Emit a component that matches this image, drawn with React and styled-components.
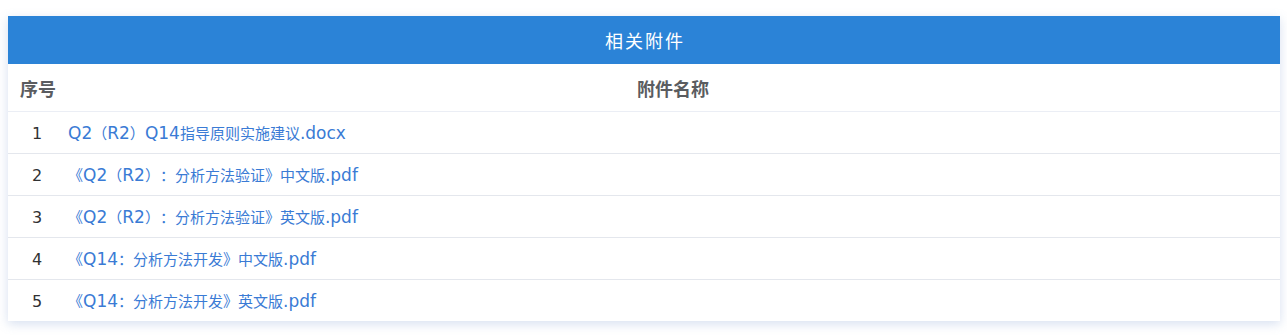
import React from 'react';
import styled, { createGlobalStyle } from 'styled-components';

const GlobalStyle = createGlobalStyle`
    body {
        margin: 0;
        background: #fff;
        font-family: "Microsoft YaHei", "Noto Sans CJK SC", "Noto Sans", sans-serif;
        text-spacing-trim: space-all;
    }
`;

const Page = styled.div`
    padding: 16px 7px 14px 8px;
`;

const Card = styled.div`
    background: #fff;
    box-shadow: 0 3px 10px rgba(110, 145, 200, 0.28);
`;

const Title = styled.div`
    height: 48px;
    display: flex;
    align-items: center;
    justify-content: center;
    background: #2b83d7;
    color: #fff;
    font-size: 18px;
    letter-spacing: 2px;
    text-indent: 2px;
`;

const Table = styled.table`
    width: 100%;
    border-collapse: collapse;
    table-layout: fixed;
`;

const Th = styled.th`
    height: 47px;
    padding: 0 ${p => (p.$center ? '0' : '12px')};
    text-align: ${p => (p.$center ? 'center' : 'left')};
    font-size: 18px;
    font-weight: bold;
    white-space: nowrap;
    color: #5a5c60;
    border-bottom: 1px solid #ebeef5;
`;

const Td = styled.td`
    height: 41px;
    padding: 0 ${p => (p.$num ? '0' : '2px')};
    text-align: ${p => (p.$num ? 'center' : 'left')};
    font-size: 15px;
    white-space: nowrap;
    color: #303133;
    border-bottom: ${p => (p.$last ? 'none' : '1px solid #e4e7ed')};
`;

const Num = styled.span`
    font-family: "DejaVu Sans", sans-serif;
    font-size: 16px;
`;

const FileLink = styled.a`
    color: #3a7bd5;
    text-decoration: none;
    cursor: pointer;
`;

const Latin = styled.span`
    font-family: "DejaVu Sans", sans-serif;
    font-size: 17px;
`;

const files = [
    'Q2（R2）Q14指导原则实施建议.docx',
    '《Q2（R2）：分析方法验证》中文版.pdf',
    '《Q2（R2）：分析方法验证》英文版.pdf',
    '《Q14：分析方法开发》中文版.pdf',
    '《Q14：分析方法开发》英文版.pdf',
];

// latin runs come out at odd indexes of the split
const renderName = name =>
    name.split(/([A-Za-z0-9.]+)/).map((part, i) =>
        i % 2 ? <Latin key={i}>{part}</Latin> : part
    );

const App = () => {
    return (
        <>
            <GlobalStyle />
            <Page>
                <Card>
                    <Title>相关附件</Title>
                    <Table>
                        <colgroup>
                            <col style={{ width: 58 }} />
                            <col />
                        </colgroup>
                        <thead>
                            <tr>
                                <Th>序号</Th>
                                <Th $center>附件名称</Th>
                            </tr>
                        </thead>
                        <tbody>
                            {files.map((name, i) => (
                                <tr key={name}>
                                    <Td $num $last={i === files.length - 1}>
                                        <Num>{i + 1}</Num>
                                    </Td>
                                    <Td $last={i === files.length - 1}>
                                        <FileLink>{renderName(name)}</FileLink>
                                    </Td>
                                </tr>
                            ))}
                        </tbody>
                    </Table>
                </Card>
            </Page>
        </>
    );
};

export default App;
